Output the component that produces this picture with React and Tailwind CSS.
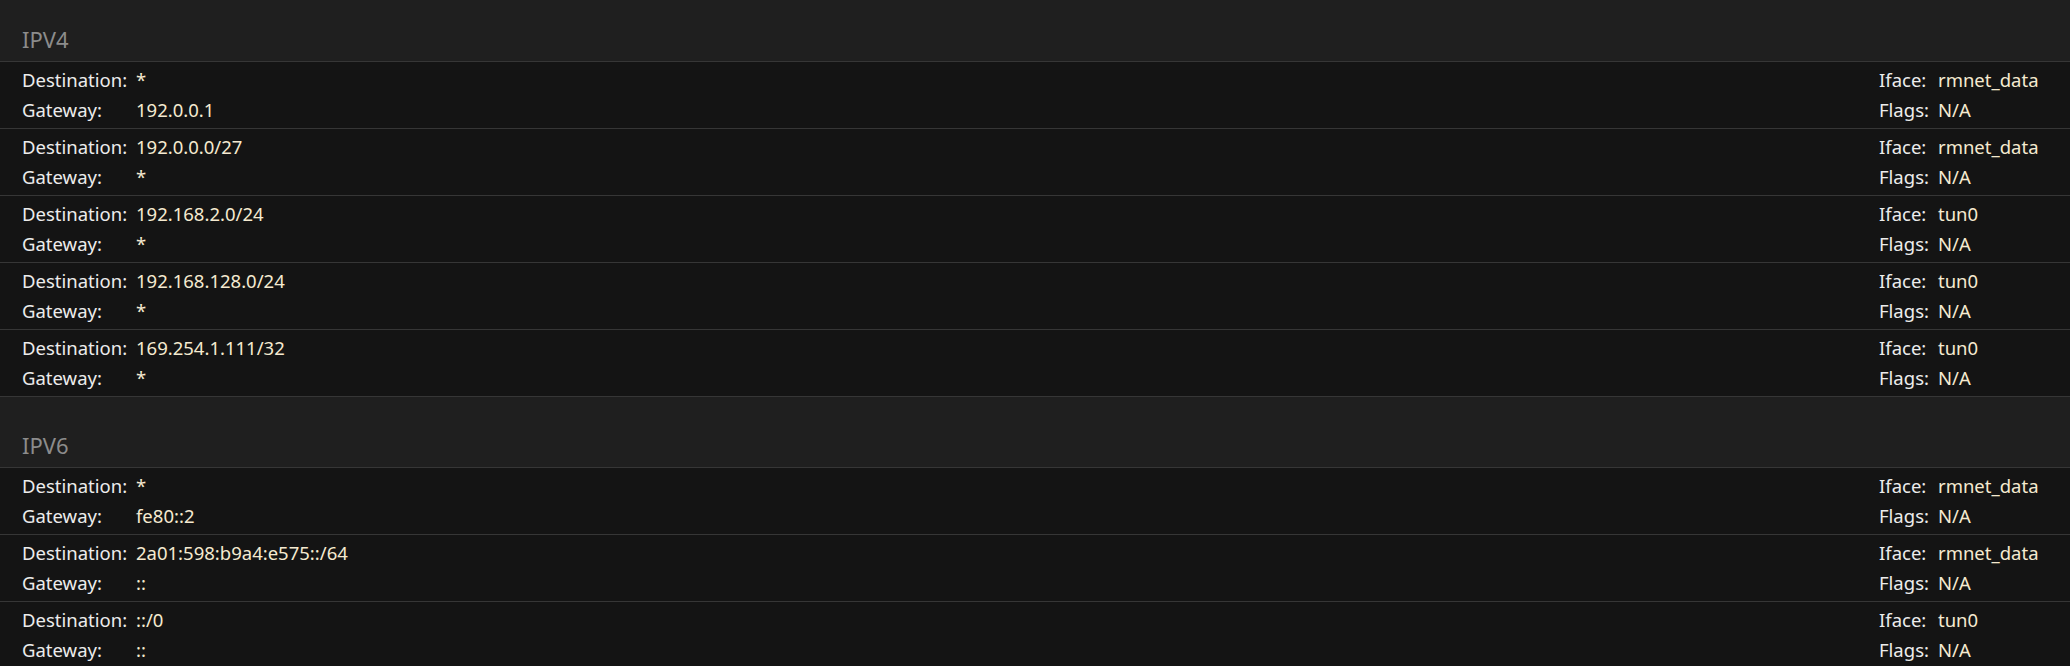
import React from "react";

const sections = [
  {
    title: "IPV4",
    height: "h-[62px]",
    routes: [
      { dest: "*", gw: "192.0.0.1", iface: "rmnet_data", flags: "N/A" },
      { dest: "192.0.0.0/27", gw: "*", iface: "rmnet_data", flags: "N/A" },
      { dest: "192.168.2.0/24", gw: "*", iface: "tun0", flags: "N/A" },
      { dest: "192.168.128.0/24", gw: "*", iface: "tun0", flags: "N/A" },
      { dest: "169.254.1.111/32", gw: "*", iface: "tun0", flags: "N/A" },
    ],
  },
  {
    title: "IPV6",
    height: "h-[71px]",
    routes: [
      { dest: "*", gw: "fe80::2", iface: "rmnet_data", flags: "N/A" },
      { dest: "2a01:598:b9a4:e575::/64", gw: "::", iface: "rmnet_data", flags: "N/A" },
      { dest: "::/0", gw: "::", iface: "tun0", flags: "N/A" },
    ],
  },
];

function RouteRow({ route }) {
  return (
    <div className="flex justify-between border-b border-[#363636] bg-[#141414] pl-[22px] pt-[3px] pb-[3px] text-[18.5px] leading-[30px]">
      <div className="flex flex-col">
        <div className="flex">
          <span className="w-[114px] text-[#ececec]">Destination:</span>
          <span className="text-[#f5ead0]">{route.dest}</span>
        </div>
        <div className="flex">
          <span className="w-[114px] text-[#ececec]">Gateway:</span>
          <span className="text-[#f5ead0]">{route.gw}</span>
        </div>
      </div>
      <div className="flex w-[191px] flex-col">
        <div className="flex">
          <span className="w-[59px] text-[#ececec]">Iface:</span>
          <span className="text-[#f5ead0]">{route.iface}</span>
        </div>
        <div className="flex">
          <span className="w-[59px] text-[#ececec]">Flags:</span>
          <span className="text-[#f5ead0]">{route.flags}</span>
        </div>
      </div>
    </div>
  );
}

export default function App() {
  return (
    <div
      className="h-[666px] w-[2070px] overflow-hidden bg-[#141414]"
      style={{ fontFamily: '"Noto Sans", sans-serif' }}
    >
      {sections.map((section) => (
        <div key={section.title}>
          <div
            className={`${section.height} flex items-end border-b border-[#363636] bg-[#1f1f1f] pb-[9px] pl-[22px]`}
          >
            <span className="text-[22px] leading-[26px] text-[#8c8c8c]">{section.title}</span>
          </div>
          {section.routes.map((route, i) => (
            <RouteRow key={i} route={route} />
          ))}
        </div>
      ))}
    </div>
  );
}
